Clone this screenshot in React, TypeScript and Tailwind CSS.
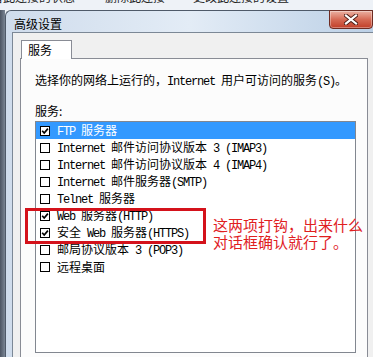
import React from "react";

type Service = {
  label: string;
  checked: boolean;
};

const services: Service[] = [
  { label: "FTP 服务器", checked: true },
  { label: "Internet 邮件访问协议版本 3 (IMAP3)", checked: false },
  { label: "Internet 邮件访问协议版本 4 (IMAP4)", checked: false },
  { label: "Internet 邮件服务器(SMTP)", checked: false },
  { label: "Telnet 服务器", checked: false },
  { label: "Web 服务器(HTTP)", checked: true },
  { label: "安全 Web 服务器(HTTPS)", checked: true },
  { label: "邮局协议版本 3 (POP3)", checked: false },
  { label: "远程桌面", checked: false },
];

// latin runs use a narrow mono face, like the old SimSun bitmap look
function Mixed({ text }: { text: string }) {
  const parts = text.split(/([\x20-\x7e]+)/).filter((p) => p !== "");
  return (
    <>
      {parts.map((p, i) =>
        /^[\x20-\x7e]+$/.test(p) ? (
          <span
            key={i}
            className="font-['Liberation_Mono',monospace] text-[12px] tracking-[-1.2px] whitespace-pre"
          >
            {p}
          </span>
        ) : (
          <span key={i}>{p}</span>
        )
      )}
    </>
  );
}

function CheckBox({ checked }: { checked: boolean }) {
  return (
    <svg width="10" height="10" viewBox="0 0 10 10" className="shrink-0">
      <rect x="0.5" y="0.5" width="9" height="9" fill="#fff" stroke="#000" />
      {checked && (
        <path d="M2.2 4.8 L4.2 7 L7.9 2.6" fill="none" stroke="#000" strokeWidth="1.7" />
      )}
    </svg>
  );
}

function CloseButton() {
  return (
    <div className="w-[44px] h-[19px] -mt-px rounded-b-[4px] border border-[#6e2b22] bg-gradient-to-b from-[#eab0a2] via-[#d66a55] to-[#c13d27] flex items-center justify-center shadow-[inset_0_0_0_1px_rgba(255,255,255,0.35)]">
      <svg width="14" height="11" viewBox="0 0 14 11">
        <path d="M2 1.5 L12 9.5 M12 1.5 L2 9.5" stroke="#4a1a14" strokeWidth="4" strokeLinecap="square" />
        <path d="M2 1.5 L12 9.5 M12 1.5 L2 9.5" stroke="#fff" strokeWidth="2.2" strokeLinecap="square" />
      </svg>
    </div>
  );
}

export default function App() {
  return (
    <div className="w-[373px] h-[357px] overflow-hidden relative bg-[#eef2f7] font-['Noto_Sans_CJK_SC',sans-serif] text-[12px] text-black">
      {/* bits of the window behind */}
      <div className="h-[10px] overflow-hidden">
        <div className="flex -mt-[9px] leading-[12px] text-[12px] text-[#222] -ml-[21px]">
          <span>查看此连接的状态</span>
          <span className="ml-[30px]">删除此连接</span>
          <span className="ml-[28px]">更改此连接的设置</span>
        </div>
      </div>

      <div className="flex h-[347px]">
        <div className="w-[5px] bg-gradient-to-r from-[#4c5563] to-[#7a8594]" />

        <div className="flex-1 flex flex-col border-l border-t border-[#4f5a69] rounded-tl-[6px] bg-gradient-to-r from-[#cfdcec] via-[#e3ecf6] to-[#bcd0e6]">
          <div className="h-[26px] flex items-start">
            <span className="ml-[8px] mt-[5px] leading-[16px] text-[12px]">高级设置</span>
            <div className="ml-auto">
              <CloseButton />
            </div>
          </div>

          <div className="flex-1 ml-[6px] border-l border-t border-[#7c8896] bg-[#f0f0f0] pl-[7px] pt-[7px]">
            <div className="ml-[1px] w-[51px] h-[19px] -mb-px relative z-10 border border-b-0 border-[#898c95] bg-white flex items-center pl-[6px] text-[12px] leading-[16px]">
              服务
            </div>
            <div className="w-[348px] h-[400px] border border-[#898c95] bg-[#fcfcfc] pl-[14px] pt-[13px]">
              <div className="leading-[16px] whitespace-nowrap">
                <Mixed text="选择你的网络上运行的，Internet 用户可访问的服务(S)。" />
              </div>
              <div className="mt-[13px] leading-[16px]">服务:</div>
              <div className="mt-[2px] w-[321px] h-[232px] border border-[#828790] bg-white">
                {services.map((s, i) => (
                  <div
                    key={i}
                    className={
                      i === 0
                        ? "h-[17px] flex items-center pl-[4px] gap-[7px] bg-[#3399ff] text-white whitespace-nowrap"
                        : "h-[17px] flex items-center pl-[4px] gap-[7px] whitespace-nowrap"
                    }
                  >
                    <CheckBox checked={s.checked} />
                    <span className="leading-[16px]">
                      <Mixed text={s.label} />
                    </span>
                  </div>
                ))}
              </div>
            </div>
          </div>
        </div>
      </div>

      {/* red annotation on top of the list */}
      <div className="absolute left-[25px] top-[208px] w-[181px] h-[36px] border-[3px] border-[#d4121b]" />
      <div className="absolute left-[213px] top-[216px] text-[15px] leading-[17px] text-[#e0201f] whitespace-nowrap">
        <div>这两项打钩，出来什么</div>
        <div>对话框确认就行了。</div>
      </div>
    </div>
  );
}
